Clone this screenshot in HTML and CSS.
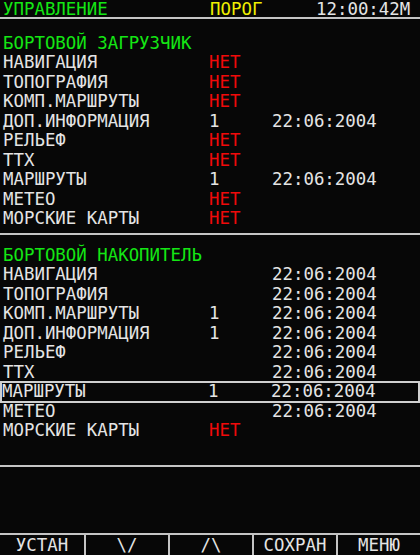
FILE: index.html
```html
<!DOCTYPE html>
<html lang="ru">
<head>
<meta charset="utf-8">
<link rel="stylesheet" href="styles.css">
</head>
<body>
<div class="screen">
  <div class="top">
    <span class="t-title green">УПРАВЛЕНИЕ</span>
    <span class="t-mode yellow">ПОРОГ</span>
    <span class="t-time">12:00:42M</span>
  </div>
  <div class="rule"></div>

  <div class="section s1">
    <div class="sec-title green">БОРТОВОЙ ЗАГРУЗЧИК</div>
    <div class="row"><span>НАВИГАЦИЯ</span><span class="red">НЕТ</span><span></span></div>
    <div class="row"><span>ТОПОГРАФИЯ</span><span class="red">НЕТ</span><span></span></div>
    <div class="row"><span>КОМП.МАРШРУТЫ</span><span class="red">НЕТ</span><span></span></div>
    <div class="row"><span>ДОП.ИНФОРМАЦИЯ</span><span>1</span><span>22:06:2004</span></div>
    <div class="row"><span>РЕЛЬЕФ</span><span class="red">НЕТ</span><span></span></div>
    <div class="row"><span>ТТХ</span><span class="red">НЕТ</span><span></span></div>
    <div class="row"><span>МАРШРУТЫ</span><span>1</span><span>22:06:2004</span></div>
    <div class="row"><span>МЕТЕО</span><span class="red">НЕТ</span><span></span></div>
    <div class="row"><span>МОРСКИЕ КАРТЫ</span><span class="red">НЕТ</span><span></span></div>
  </div>
  <div class="rule r2"></div>

  <div class="section s2">
    <div class="sec-title green">БОРТОВОЙ НАКОПИТЕЛЬ</div>
    <div class="row"><span>НАВИГАЦИЯ</span><span></span><span>22:06:2004</span></div>
    <div class="row"><span>ТОПОГРАФИЯ</span><span></span><span>22:06:2004</span></div>
    <div class="row"><span>КОМП.МАРШРУТЫ</span><span>1</span><span>22:06:2004</span></div>
    <div class="row"><span>ДОП.ИНФОРМАЦИЯ</span><span>1</span><span>22:06:2004</span></div>
    <div class="row"><span>РЕЛЬЕФ</span><span></span><span>22:06:2004</span></div>
    <div class="row"><span>ТТХ</span><span></span><span>22:06:2004</span></div>
    <div class="row selected"><span>МАРШРУТЫ</span><span>1</span><span>22:06:2004</span></div>
    <div class="row"><span>МЕТЕО</span><span></span><span>22:06:2004</span></div>
    <div class="row"><span>МОРСКИЕ КАРТЫ</span><span class="red">НЕТ</span><span></span></div>
  </div>
  <div class="rule r3"></div>

  <div class="spacer"></div>
  <div class="rule"></div>
  <div class="buttons">
    <div class="btn">УСТАН</div>
    <div class="btn">\/</div>
    <div class="btn">/\</div>
    <div class="btn">СОХРАН</div>
    <div class="btn">МЕНЮ</div>
  </div>
</div>
</body>
</html>
```

FILE: styles.css
```css
html, body {
  margin: 0;
  padding: 0;
  background: #070707;
}
body {
  width: 420px;
  height: 555px;
  overflow: hidden;
  font-family: "DejaVu Sans Mono", "Liberation Mono", monospace;
  font-size: 17.4px;
  color: #e4e4e4;
}
.screen {
  display: flex;
  flex-direction: column;
  width: 420px;
  height: 555px;
}
.green { color: #14e614; }
.yellow { color: #f0f000; }
.red { color: #f00a0a; }

.top {
  height: 17px;
  line-height: 18px;
  display: grid;
  grid-template-columns: 207px 106px 1fr;
  padding-left: 3px;
  white-space: nowrap;
}

.rule {
  height: 2px;
  background: #c4c4c4;
  flex: none;
}
.r2 { margin-top: 4px; }
.r3 { margin-top: 24px; }

.section {
  padding-left: 3px;
  line-height: 19.5px;
}
.s1 { padding-top: 14.5px; }
.s2 { padding-top: 11px; }

.sec-title { height: 19.5px; }

.row {
  display: grid;
  grid-template-columns: 206px 63px 1fr;
  height: 19.5px;
  white-space: nowrap;
}
.row.selected {
  margin-left: -2px;
  margin-right: 1px;
  padding-left: 1px;
  outline: 2px solid #d0d0d0;
  outline-offset: -1px;
}

.spacer { flex: 1; }

.buttons {
  height: 20px;
  display: grid;
  grid-template-columns: repeat(5, 1fr);
  line-height: 21px;
}
.btn {
  text-align: center;
  white-space: nowrap;
}
.btn + .btn {
  border-left: 2px solid #c4c4c4;
}
```
